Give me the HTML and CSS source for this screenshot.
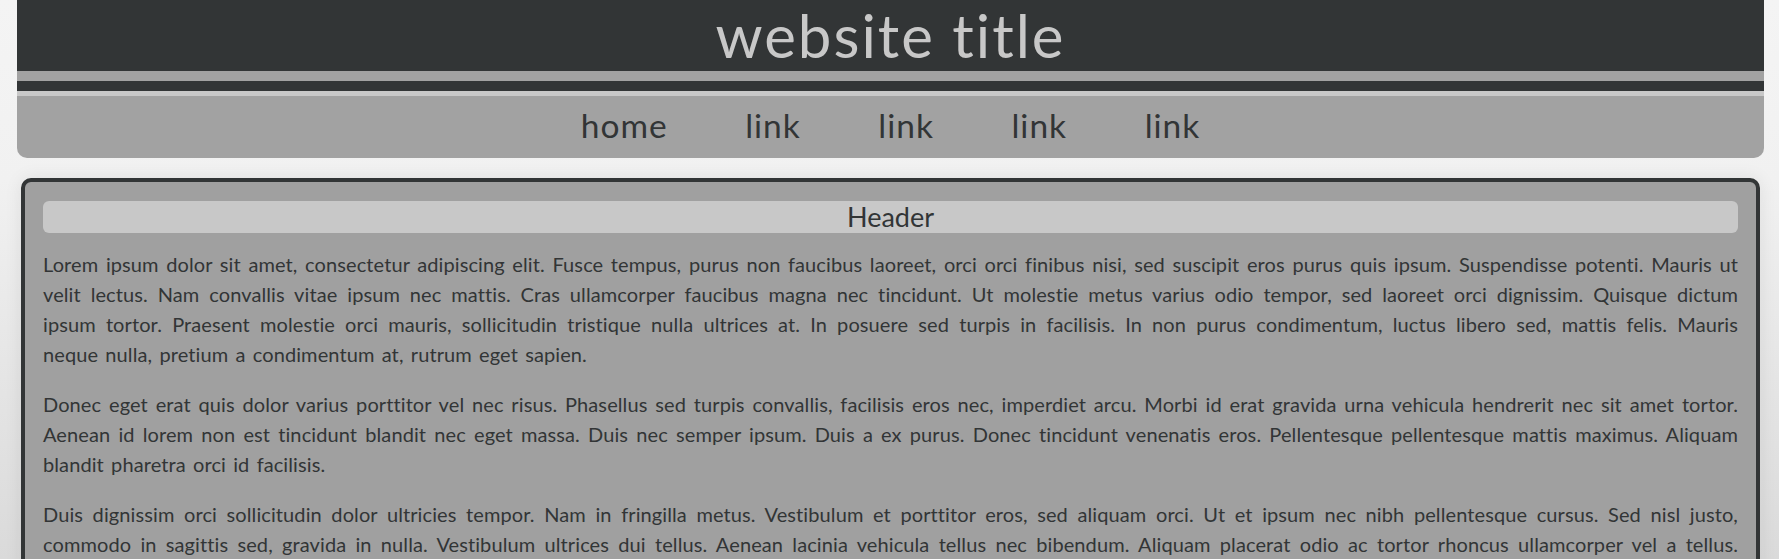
FILE: index.html
```html
<!DOCTYPE html>
<html lang="en">
<head>
<meta charset="utf-8">
<title>website title</title>
<link rel="stylesheet" href="styles.css">
</head>
<body>
<div class="wrap">
  <header class="site-header">
    <h1 class="site-title">website title</h1>
  </header>
  <nav class="site-nav">
    <a class="nav-link" href="#">home</a>
    <a class="nav-link" href="#">link</a>
    <a class="nav-link" href="#">link</a>
    <a class="nav-link" href="#">link</a>
    <a class="nav-link" href="#">link</a>
  </nav>
  <main class="content">
    <h2 class="content-header">Header</h2>
    <p class="para">
      <span class="line">Lorem ipsum dolor sit amet, consectetur adipiscing elit. Fusce tempus, purus non faucibus laoreet, orci orci finibus nisi, sed suscipit eros purus quis ipsum. Suspendisse potenti. Mauris ut</span>
      <span class="line">velit lectus. Nam convallis vitae ipsum nec mattis. Cras ullamcorper faucibus magna nec tincidunt. Ut molestie metus varius odio tempor, sed laoreet orci dignissim. Quisque dictum</span>
      <span class="line">ipsum tortor. Praesent molestie orci mauris, sollicitudin tristique nulla ultrices at. In posuere sed turpis in facilisis. In non purus condimentum, luctus libero sed, mattis felis. Mauris</span>
      <span class="line line-end">neque nulla, pretium a condimentum at, rutrum eget sapien.</span>
    </p>
    <p class="para">
      <span class="line">Donec eget erat quis dolor varius porttitor vel nec risus. Phasellus sed turpis convallis, facilisis eros nec, imperdiet arcu. Morbi id erat gravida urna vehicula hendrerit nec sit amet tortor.</span>
      <span class="line">Aenean id lorem non est tincidunt blandit nec eget massa. Duis nec semper ipsum. Duis a ex purus. Donec tincidunt venenatis eros. Pellentesque pellentesque mattis maximus. Aliquam</span>
      <span class="line line-end">blandit pharetra orci id facilisis.</span>
    </p>
    <p class="para">
      <span class="line">Duis dignissim orci sollicitudin dolor ultricies tempor. Nam in fringilla metus. Vestibulum et porttitor eros, sed aliquam orci. Ut et ipsum nec nibh pellentesque cursus. Sed nisl justo,</span>
      <span class="line">commodo in sagittis sed, gravida in nulla. Vestibulum ultrices dui tellus. Aenean lacinia vehicula tellus nec bibendum. Aliquam placerat odio ac tortor rhoncus ullamcorper vel a tellus.</span>
      <span class="line line-end">Nullam vitae lectus vel nisi dignissim convallis. Integer at lacus sed neque faucibus pulvinar id sit amet nibh.</span>
    </p>
  </main>
</div>
</body>
</html>
```

FILE: styles.css
```css
html {
  background-color: #dadada;
  background-image: linear-gradient(#f4f4f4 0, #f1f1f1 180px, #dadada 559px);
  background-repeat: no-repeat;
  background-size: 100% 559px;
}

body {
  margin: 0;
  font-family: Lato, "Liberation Sans", sans-serif;
  color: #323536;
}

.wrap {
  margin: 0 15px 0 17px;
}

.site-header {
  background: #323536;
  height: 71px;
  border-bottom: 10px solid #a2a2a2;
  text-align: center;
}

.site-title {
  margin: 0;
  font-size: 60px;
  line-height: 71px;
  font-weight: normal;
  letter-spacing: 2px;
  color: #c8c8c8;
}

.site-nav {
  display: flex;
  justify-content: center;
  gap: 77.5px;
  background: #a2a2a2;
  border-top: 10px solid #323536;
  box-shadow: inset 0 5px 0 #c8c8c8;
  padding: 5px 0 4px;
  border-radius: 0 0 10px 10px;
}

.nav-link {
  font-size: 33.5px;
  line-height: 58px;
  letter-spacing: 1px;
  color: #323536;
  text-decoration: none;
}

.content {
  display: block;
  margin: 20px 4px 0;
  border: 4px solid #323536;
  border-radius: 10px;
  background: #a0a0a0;
  padding: 19px 18px;
  box-shadow: 0 0 18px rgba(0, 0, 0, 0.08);
}

.content-header {
  margin: 0 0 16px;
  height: 32px;
  line-height: 32px;
  font-size: 27px;
  font-weight: normal;
  text-align: center;
  background: #c8c8c8;
  border-radius: 6px;
  color: #323536;
}

.para {
  margin: 0 0 20px;
  font-size: 20px;
  line-height: 30px;
  letter-spacing: 0.1px;
  word-spacing: 2px;
}

.line {
  display: block;
  text-align: justify;
  text-align-last: justify;
}

.line-end {
  text-align-last: left;
}
```
